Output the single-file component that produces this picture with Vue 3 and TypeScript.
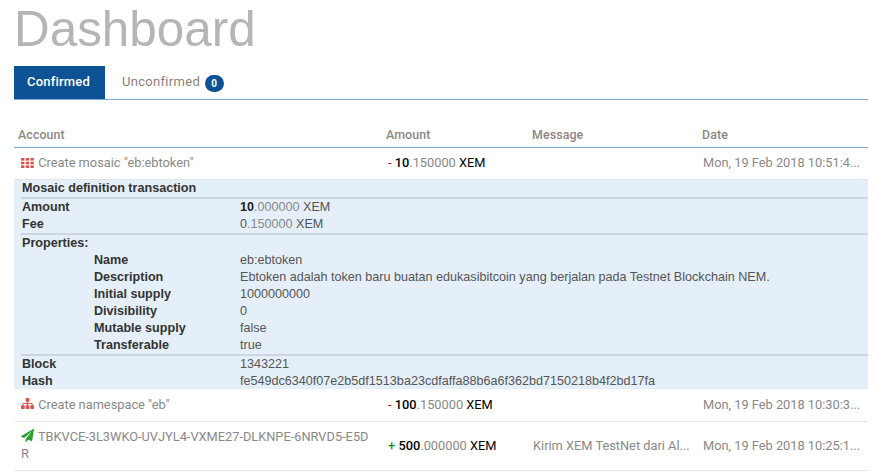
<script setup lang="ts">
interface Prop { label: string; value: string }
const props: Prop[] = [
  { label: 'Name', value: 'eb:ebtoken' },
  { label: 'Description', value: 'Ebtoken adalah token baru buatan edukasibitcoin yang berjalan pada Testnet Blockchain NEM.' },
  { label: 'Initial supply', value: '1000000000' },
  { label: 'Divisibility', value: '0' },
  { label: 'Mutable supply', value: 'false' },
  { label: 'Transferable', value: 'true' },
]
</script>

<template>
  <div class="page">
    <h1 class="title">Dashboard</h1>
    <div class="tabs">
      <div class="tab active">Confirmed</div>
      <div class="tab">Unconfirmed <span class="badge">0</span></div>
    </div>

    <div class="grid head">
      <div class="c1">Account</div>
      <div>Amount</div>
      <div>Message</div>
      <div>Date</div>
    </div>

    <div class="grid row r1">
      <div class="acc">
        <svg class="ico" width="13" height="10" viewBox="0 0 13 10">
          <g fill="#d9534f">
            <rect x="0" y="0" width="3.4" height="2.6" /><rect x="4.7" y="0" width="3.4" height="2.6" /><rect x="9.4" y="0" width="3.4" height="2.6" />
            <rect x="0" y="3.7" width="3.4" height="2.6" /><rect x="4.7" y="3.7" width="3.4" height="2.6" /><rect x="9.4" y="3.7" width="3.4" height="2.6" />
            <rect x="0" y="7.4" width="3.4" height="2.6" /><rect x="4.7" y="7.4" width="3.4" height="2.6" /><rect x="9.4" y="7.4" width="3.4" height="2.6" />
          </g>
        </svg>
        Create mosaic "eb:ebtoken"
      </div>
      <div class="amt"><span class="minus">-</span> <b>10</b>.150000 <span class="unit">XEM</span></div>
      <div></div>
      <div class="date">Mon, 19 Feb 2018 10:51:4...</div>
    </div>

    <div class="detail">
      <div class="d-title">Mosaic definition transaction</div>
      <div class="section">
        <div class="d-row"><span class="lab">Amount</span><span class="val"><b>10</b><span class="dec">.000000</span> XEM</span></div>
        <div class="d-row"><span class="lab">Fee</span><span class="val">0<span class="dec">.150000</span> XEM</span></div>
      </div>
      <div class="section">
        <div class="d-row"><span class="lab">Properties:</span></div>
        <div v-for="p in props" :key="p.label" class="d-row">
          <span class="lab nested">{{ p.label }}</span><span class="val">{{ p.value }}</span>
        </div>
      </div>
      <div class="section">
        <div class="d-row"><span class="lab">Block</span><span class="val">1343221</span></div>
        <div class="d-row"><span class="lab">Hash</span><span class="val">fe549dc6340f07e2b5df1513ba23cdfaffa88b6a6f362bd7150218b4f2bd17fa</span></div>
      </div>
    </div>

    <div class="grid row r2">
      <div class="acc">
        <svg class="ico" width="13" height="13" viewBox="0 0 1792 1792">
          <path fill="#d9534f" d="M1792 1248v320q0 40-28 68t-68 28h-320q-40 0-68-28t-28-68v-320q0-40 28-68t68-28h96v-192h-512v192h96q40 0 68 28t28 68v320q0 40-28 68t-68 28h-320q-40 0-68-28t-28-68v-320q0-40 28-68t68-28h96v-192h-512v192h96q40 0 68 28t28 68v320q0 40-28 68t-68 28h-320q-40 0-68-28t-28-68v-320q0-40 28-68t68-28h96v-192q0-52 38-90t90-38h512v-192h-96q-40 0-68-28t-28-68v-320q0-40 28-68t68-28h320q40 0 68 28t28 68v320q0 40-28 68t-68 28h-96v192h512q52 0 90 38t38 90v192h96q40 0 68 28t28 68z" />
        </svg>
        Create namespace "eb"
      </div>
      <div class="amt"><span class="minus">-</span> <b>100</b>.150000 <span class="unit">XEM</span></div>
      <div></div>
      <div class="date">Mon, 19 Feb 2018 10:30:3...</div>
    </div>

    <div class="grid row r3">
      <div class="acc wrap">
        <svg class="ico" width="13" height="13" viewBox="0 0 1792 1792">
          <path fill="#2ca02c" d="M1764 11q33 24 27 64l-256 1536q-5 29-32 45-14 8-31 8-11 0-24-5l-453-185-242 295q-18 23-49 23-13 0-22-4-19-7-30.5-23.5t-11.5-36.5v-349l864-1059-1069 925-395-162q-37-14-40-55-2-40 32-59l1664-960q15-9 32-9 20 0 36 11z" />
        </svg>
        TBKVCE-3L3WKO-UVJYL4-VXME27-DLKNPE-6NRVD5-E5D<br />R
      </div>
      <div class="amt"><span class="plus">+</span> <b>500</b>.000000 <span class="unit">XEM</span></div>
      <div class="msg">Kirim XEM TestNet dari Al...</div>
      <div class="date">Mon, 19 Feb 2018 10:25:1...</div>
    </div>
  </div>
</template>

<style scoped>
.page {
  width: 882px;
  height: 474px;
  overflow: hidden;
  box-sizing: border-box;
  padding: 0 14px;
  background: #fff;
  font-family: Roboto, sans-serif;
  font-size: 12.8px;
  color: #888;
}
.title {
  margin: 0;
  font-family: "Liberation Sans", Arial, sans-serif;
  font-size: 49.4px;
  font-weight: 400;
  line-height: 58px;
  height: 66px;
  color: #b5b5b5;
}
.tabs {
  display: flex;
  height: 33px;
  width: 854px;
  border-bottom: 1px solid #7aa9d8;
}
.tab {
  padding: 0 17px;
  line-height: 31px;
  font-size: 13px;
  color: #8d7f78;
  letter-spacing: 0.3px;
}
.tab.active {
  background: #0e5296;
  color: #fff;
  font-weight: 500;
  padding: 0 13px;
  width: 91px;
  box-sizing: border-box;
  letter-spacing: 0.2px;
}
.badge {
  display: inline-block;
  width: 19px;
  height: 17px;
  line-height: 18px;
  margin-left: 1px;
  border-radius: 9px;
  background: #0e5296;
  color: #fff;
  font-size: 10px;
  font-weight: 700;
  text-align: center;
  vertical-align: -1px;
  letter-spacing: 0;
}
.grid {
  display: grid;
  grid-template-columns: 372px 146px 170px 166px;
  width: 854px;
}
.head {
  margin-top: 24px;
  height: 24px;
  line-height: 22px;
  border-bottom: 1px solid #7aa9d8;
  box-sizing: border-box;
  font-size: 12.4px;
  font-weight: 500;
  color: #8d8684;
  letter-spacing: 0.1px;
}
.c1 { padding-left: 4px; }
.row {
  align-items: center;
  border-bottom: 1px solid #e4e4e4;
  box-sizing: border-box;
  padding-bottom: 2px;
}
.r1 { height: 32px; }
.r2 { height: 33px; }
.r3 { height: 49px; }
.acc { padding-left: 7px; line-height: 17px; }
.ico { vertical-align: -1px; margin-right: 1px; }
.amt { padding-left: 2px; color: #888; }
.amt b { color: #000; font-weight: 500; }
.unit { color: #000; }
.minus { color: #c00; }
.plus { color: #080; }
.msg { padding-left: 1px; }
.date { padding-left: 1px; }
.detail {
  width: 854px;
  height: 209px;
  box-sizing: border-box;
  background: #e5eff9;
  padding: 0 0 0 7px;
  line-height: 17px;
  font-family: "Liberation Sans", Arial, sans-serif;
  font-size: 12.6px;
  color: #555;
}
.d-title {
  height: 17px;
  line-height: 16px;
  padding-left: 1px;
  font-weight: 700;
  color: #333;
}
.section {
  border-top: 2px solid #cdd6e0;
}
.d-row { display: flex; height: 17px; }
.lab {
  width: 219px;
  padding-left: 1px;
  box-sizing: border-box;
  font-weight: 700;
  color: #333;
  flex: none;
}
.lab.nested { padding-left: 73px; }
.val b { color: #222; font-weight: 700; }
.dec { color: #888; }
</style>
